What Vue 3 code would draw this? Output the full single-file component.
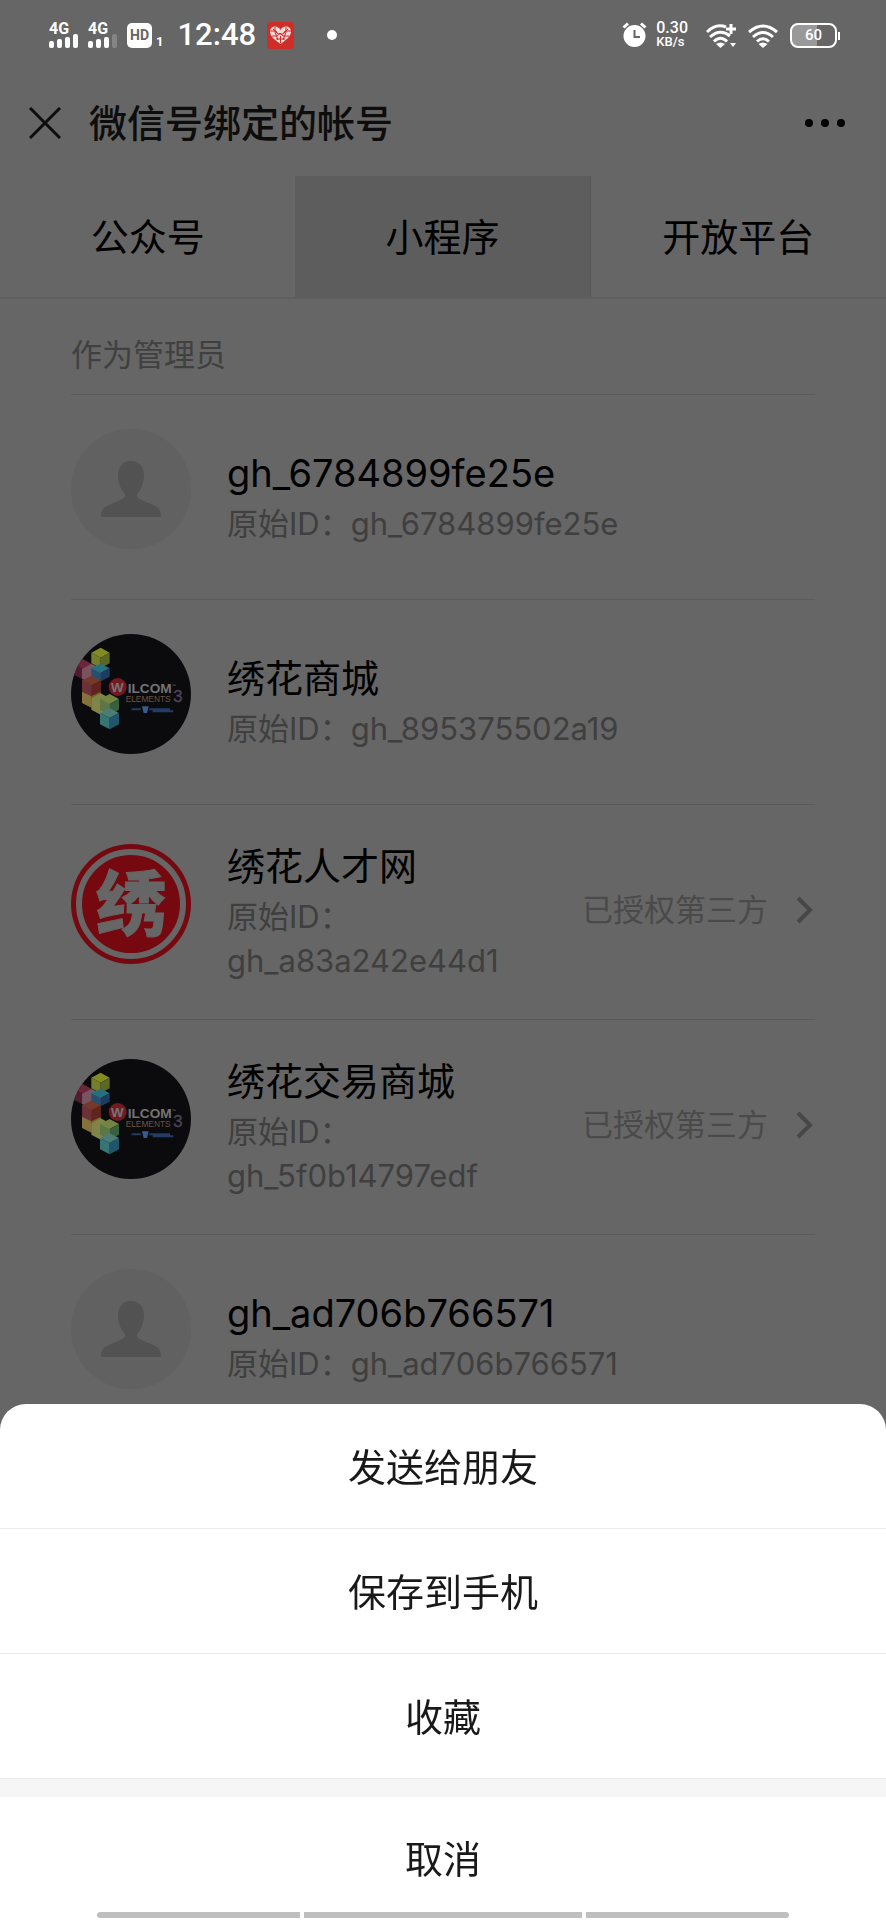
<script setup>
const tabs = [
  { name: '公众号', active: false },
  { name: '小程序', active: true },
  { name: '开放平台', active: false },
]

const accounts = [
  { name: 'gh_6784899fe25e', id: 'gh_6784899fe25e', avatar: 'person', authorized: false },
  { name: '绣花商城', id: 'gh_895375502a19', avatar: 'wilcom', authorized: false },
  { name: '绣花人才网', id: 'gh_a83a242e44d1', avatar: 'seal', authorized: true },
  { name: '绣花交易商城', id: 'gh_5f0b14797edf', avatar: 'wilcom', authorized: true },
  { name: 'gh_ad706b766571', id: 'gh_ad706b766571', avatar: 'person', authorized: false },
]

const actions = ['发送给朋友', '保存到手机', '收藏']
</script>

<template>
  <div class="page">
    <div class="status">
      <div class="status-side">
        <span class="signal">
          <span class="net">4G</span>
          <svg width="29" height="14" viewBox="0 0 29 14" fill="#fff">
            <rect x="0" y="7" width="5" height="7" rx="2" />
            <rect x="8" y="5" width="5" height="9" rx="2" />
            <rect x="16" y="3" width="5" height="11" rx="2" />
            <rect x="24" y="0" width="5" height="14" rx="2" />
          </svg>
        </span>
        <span class="signal">
          <span class="net">4G</span>
          <svg width="29" height="14" viewBox="0 0 29 14" fill="#fff">
            <rect x="0" y="7" width="5" height="7" rx="2" />
            <rect x="8" y="5" width="5" height="9" rx="2" />
            <rect x="16" y="3" width="5" height="11" rx="2" />
            <rect x="24" y="0" width="5" height="14" rx="2" fill="#858585" />
          </svg>
        </span>
        <span class="hd">HD</span>
        <span class="sim">1</span>
        <span class="time">12:48</span>
        <svg class="heart" width="27" height="27" viewBox="0 0 27 27">
          <rect width="27" height="27" rx="4" fill="#cf2d27" />
          <path d="M13.500 22C8 18 3 14.500 3 9.500C3 6 5.500 4.500 8 4.500C10.500 4.500 12.500 6 13.500 8C14.500 6 16.500 4.500 19 4.500C21.500 4.500 24 6 24 9.500C24 14.500 19 18 13.500 22Z" fill="#f7d9d7" />
          <path d="M3 9h6l2 3h5l2-3h6M5 14h5l3-3 3 3h6M8 5v5l3 8M19 5v5l-3 8M6 7l4 4M21 7l-4 4M9 17h9M13.500 14v7" fill="none" stroke="#cf2d27" stroke-width="1" />
        </svg>
        <span class="dot"></span>
      </div>
      <div class="status-side">
        <svg width="26" height="26" viewBox="0 0 26 26">
          <circle cx="12.500" cy="14" r="11" fill="#fff" />
          <path d="M1.500 5.500L6 1.500M19 1.500l4.500 4" stroke="#fff" stroke-width="3" />
          <path d="M12.500 8v7h5.500" fill="none" stroke="#666" stroke-width="2" />
        </svg>
        <span class="speed"><span>0.30</span><span class="unit">KB/s</span></span>
        <svg class="wifi-plus" width="32" height="25" viewBox="0 0 32 25" fill="none" stroke="#fff" stroke-width="3">
          <path d="M1 9Q10 0 20 4M4 14Q14 5 24 13M8 18.500Q14.500 12 21 18.500" />
          <path d="M10 21q4.500-3 9 0l-4.500 4z" fill="#fff" stroke="none" />
          <path d="M25 1v10M20 6h10" />
          <path d="M24 20h6l-3 4z" fill="#fff" stroke="none" />
        </svg>
        <svg class="wifi" width="30" height="25" viewBox="0 0 30 25" fill="none" stroke="#fff" stroke-width="3">
          <path d="M1 9Q15 -3 29 9M5 14Q15 5 25 14M9 18.500Q15 13 21 18.500" />
          <path d="M10.500 21q4.500-3 9 0l-4.500 4z" fill="#fff" stroke="none" />
        </svg>
        <span class="battery">60</span>
      </div>
    </div>

    <header class="header">
      <button class="icon-button" aria-label="关闭">
        <svg width="32" height="32" viewBox="0 0 32 32" fill="none" stroke="#0d0d0d" stroke-width="3">
          <path d="M1 1l30 30M31 1L1 31" />
        </svg>
      </button>
      <h1>微信号绑定的帐号</h1>
      <button class="icon-button" aria-label="更多">
        <svg width="40" height="8" viewBox="0 0 40 8" fill="#000">
          <circle cx="4" cy="4" r="4" />
          <circle cx="20" cy="4" r="4" />
          <circle cx="36" cy="4" r="4" />
        </svg>
      </button>
    </header>

    <nav class="tabs">
      <button v-for="tab in tabs" :key="tab.name" class="tab" :class="{ active: tab.active }">{{ tab.name }}</button>
    </nav>

    <main class="content">
      <h2>作为管理员</h2>
      <ul class="list">
        <li v-for="account in accounts" :key="account.id" class="row">
          <svg v-if="account.avatar === 'person'" class="avatar" viewBox="0 0 120 120">
            <circle cx="60" cy="60" r="60" fill="#616161" />
            <path d="M60 32C68 32 73 38 73 46C73 54 70 61 66 65V68C72 73 80 74 86 78C89 80 90 83 90 88H30C30 83 31 80 34 78C40 74 48 73 54 68V65C50 61 47 54 47 46C47 38 52 32 60 32Z" fill="#525252" />
          </svg>
          <svg v-else-if="account.avatar === 'wilcom'" class="avatar" viewBox="31 43 360 360">
            <defs>
              <clipPath :id="'round-' + account.id"><circle cx="211" cy="223" r="180" /></clipPath>
            </defs>
            <g :clip-path="'url(#round-' + account.id + ')'">
              <rect x="31" y="43" width="360" height="360" fill="#0b0b0e" />
              <path d="M92 99l28-15 27 15-27 15z" fill="#838b24" />
              <path d="M92 99l28 15v32l-28-15z" fill="#747e2c" />
              <path d="M147 99l-27 15v32l27-15z" fill="#5b6821" />
              <path d="M38 132l28-14 26 14v32l-27 14-27-14z" fill="#6b2739" />
              <path d="M38 132l27 14v32l-27-14z" fill="#501c31" />
              <path d="M64 148l28-15 28 15v30l-28 15-28-15z" fill="#7a5360" />
              <path d="M92 133l28 14v30l-28 14z" fill="#656275" />
              <path d="M92 146l28-14 27 14-27 14z" fill="#277080" />
              <path d="M92 146l28 14v25l-28-14z" fill="#245070" />
              <path d="M147 146l-27 14v25l27-14z" fill="#1b3d62" />
              <path d="M64 182l28-14 28 14v34l-28 16-28-16z" fill="#74392a" />
              <path d="M64 182l28 14v34l-28-14z" fill="#6c3038" />
              <path d="M120 182l-28 14v34l28-14z" fill="#5e241d" />
              <path d="M64 216l28 14v34l-28-14z" fill="#84713b" />
              <path d="M92 230l28-14v34l-28 14z" fill="#796128" />
              <path d="M92 236l28-15 28 15v34l-28 15-28-15z" fill="#808447" />
              <path d="M118 238l29-15 28 15-28 15z" fill="#768442" />
              <path d="M118 238l29 15v32l-29-15z" fill="#5b7649" />
              <path d="M175 238l-28 15v32l28-15z" fill="#385f3e" />
              <path d="M118 280l29-14 28 14-28 15z" fill="#4b7d76" />
              <path d="M118 280l29 15v34l-29-15z" fill="#377474" />
              <path d="M175 280l-28 15v34l28-15z" fill="#20566c" />
              <circle cx="171" cy="202" r="27" fill="#741922" />
              <text x="151" y="217" font-size="40" font-weight="700" fill="#747474">W</text>
              <text x="201" y="219" font-size="41" font-weight="700" fill="#737373">ILCOM</text>
              <text x="333" y="201" font-size="12" fill="#737373">™</text>
              <text x="195" y="248" font-size="25" fill="#72533f">ELEMENTS</text>
              <text x="338" y="248" font-size="50" fill="#4e4458" stroke="#4e4458" stroke-width="1">3</text>
              <path d="M213 269h27M266 269h62M276 275h62" stroke="#213d66" stroke-width="6" />
              <path d="M244 260h20l-5 20h-10z" fill="#355c8d" />
            </g>
          </svg>
          <svg v-else class="avatar" viewBox="0 0 120 120">
            <circle cx="60" cy="60" r="60" fill="#75090f" />
            <circle cx="60" cy="60" r="52" fill="none" stroke="#666" stroke-width="6" />
            <text class="seal" x="60" y="86" text-anchor="middle" font-size="70" font-weight="900" fill="#666" stroke="#666" stroke-width="1">绣</text>
          </svg>

          <div class="info">
            <h3>{{ account.name }}</h3>
            <p><span>原始ID：</span><wbr /><span>{{ account.id }}</span></p>
          </div>

          <a v-if="account.authorized" class="auth" href="#">
            已授权第三方
            <svg width="18" height="28" viewBox="0 0 18 28" fill="none" stroke="#474747" stroke-width="4">
              <path d="M2 2l12 12L2 26" />
            </svg>
          </a>
        </li>
      </ul>
    </main>

    <div class="sheet" role="dialog" aria-label="操作">
      <button v-for="action in actions" :key="action" class="action">{{ action }}</button>
      <button class="action cancel">取消</button>
      <div class="gesture"><i class="side"></i><i class="middle"></i><i class="side"></i></div>
    </div>
  </div>
</template>

<style>
body {
  margin: 0;
  background: #666;
}
</style>

<style scoped>
* {
  box-sizing: border-box;
}

.page {
  min-height: 100vh;
  background: #666;
  color: #000;
  font-family: Inter, "Noto Sans CJK SC", sans-serif;
}

button {
  margin: 0;
  padding: 0;
  border: 0;
  background: none;
  color: inherit;
  font: inherit;
}

svg {
  display: block;
  flex: none;
}

h1, h2, h3, p, ul {
  margin: 0;
  padding: 0;
  font-weight: 400;
}

.status {
  display: flex;
  justify-content: space-between;
  height: 70px;
  padding: 0 49px;
  color: #fff;
}

.status-side {
  display: flex;
  align-items: center;
}

.signal {
  display: flex;
  flex-direction: column;
  margin-right: 10px;
}

.net {
  height: 11px;
  font: 700 16px/12px Roboto, sans-serif;
}

.hd {
  width: 25px;
  height: 25px;
  border-radius: 5px;
  background: #fff;
  color: #666;
  font: 700 14px/25px Roboto, sans-serif;
  text-align: center;
}

.sim {
  margin: 14px 14px 0 4px;
  font: 700 13px/14px Roboto, sans-serif;
}

.time {
  font: 500 31px/36px Roboto, sans-serif;
}

.heart {
  margin-left: 11px;
}

.dot {
  width: 10px;
  height: 10px;
  margin-left: 33px;
  border-radius: 50%;
  background: #fff;
}

.speed {
  display: flex;
  flex-direction: column;
  margin-left: 8px;
  font: 500 16px/14px Roboto, sans-serif;
}

.unit {
  font-size: 13px;
}

.wifi-plus {
  margin-left: 18px;
}

.wifi {
  margin-left: 10px;
}

.battery {
  position: relative;
  width: 47px;
  height: 25px;
  margin-left: 12px;
  border: 2px solid #fff;
  border-radius: 8px;
  background: linear-gradient(90deg, #999 57%, #666 57%);
  font: 500 15px/21px Roboto, sans-serif;
  text-align: center;
}

.battery::after {
  content: "";
  position: absolute;
  top: 7px;
  right: -5px;
  width: 2px;
  height: 8px;
  background: #fff;
}

.header {
  display: flex;
  align-items: center;
  height: 106px;
  padding: 0 41px 0 29px;
}

.header h1 {
  flex: 1;
  margin-left: 28px;
  color: #0d0d0d;
  font-size: 38px;
  font-weight: 500;
  line-height: 54px;
}

.tabs {
  display: grid;
  grid-template-columns: repeat(3, 1fr);
  border-bottom: 2px solid #5f5f5f;
}

.tab {
  height: 121px;
  padding-bottom: 4px;
  font-size: 38px;
}

.active {
  background: #5d5d5d;
  border-right: 1px solid #565656;
}

.content {
  padding: 0 71px;
}

.content h2 {
  padding: 34px 0 17px;
  border-bottom: 1px solid #5b5b5b;
  color: #404040;
  font-size: 31px;
  line-height: 44px;
}

.list {
  list-style: none;
}

.row {
  display: flex;
  align-items: center;
  min-height: 205px;
  padding: 32px 0 36px;
  border-bottom: 1px solid #5b5b5b;
}

.avatar {
  width: 120px;
  height: 120px;
  margin-bottom: 12px;
  font-family: "Liberation Sans", sans-serif;
}

.seal {
  font-family: "Noto Sans CJK SC", sans-serif;
}

.info {
  flex: 1;
  min-width: 0;
  margin-left: 36px;
}

.info h3 {
  font-size: 38px;
  line-height: 58px;
}

.info p {
  color: #3f3f3f;
  font-size: 31px;
  line-height: 44px;
}

.info span {
  display: inline-block;
}

.auth {
  display: flex;
  align-items: center;
  gap: 28px;
  margin-right: 1px;
  margin-left: 16px;
  color: #4a4a4a;
  font-size: 31px;
  line-height: 44px;
  text-decoration: none;
}

.sheet {
  position: fixed;
  right: 0;
  bottom: 0;
  left: 0;
  display: flex;
  flex-direction: column;
  overflow: hidden;
  border-radius: 26px 26px 0 0;
  background: #fff;
  color: #191919;
}

.action {
  height: 125px;
  padding-bottom: 4px;
  border-bottom: 1px solid #ececec;
  font-size: 38px;
}

.cancel {
  height: 141px;
  border-top: 18px solid #f6f6f6;
  border-bottom: 0;
}

.gesture {
  position: absolute;
  right: 11%;
  bottom: 2px;
  left: 11%;
  display: flex;
  gap: 4px;
}

.gesture i {
  height: 6px;
  background: #bfbfbf;
}

.side {
  flex: 202;
}

.middle {
  flex: 278;
}

.side:first-child {
  border-radius: 3px 0 0 3px;
}

.side:last-child {
  border-radius: 0 3px 3px 0;
}
</style>
